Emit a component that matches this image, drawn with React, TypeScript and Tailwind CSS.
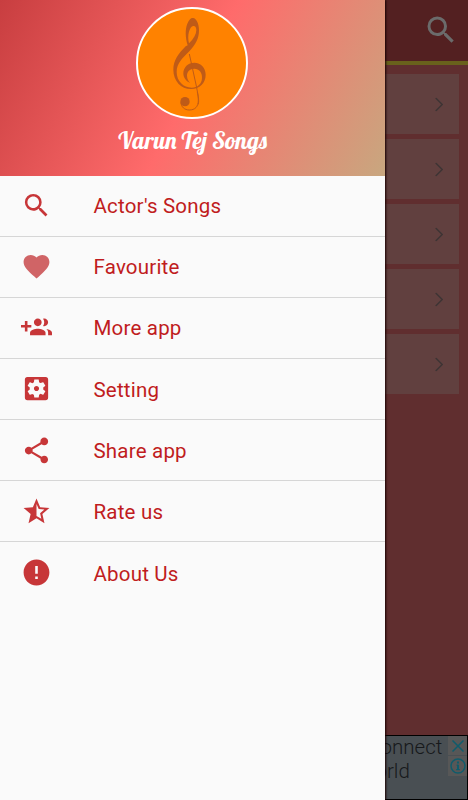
import type { IconType } from "react-icons";
import { MdError, MdFavorite, MdSearch, MdSettingsApplications, MdShare, MdStarHalf } from "react-icons/md";
import clsx from "clsx";

function GroupAdd({ className }: { className?: string }) {
  return (
    <svg viewBox="0 0 24 24" fill="currentColor" className={className}>
      <path d="M8 10H5V7H3v3H0v2h3v3h2v-3h3v-2zm10 1c1.66 0 2.99-1.34 2.99-3S19.66 5 18 5c-.32 0-.63.05-.91.14.57.81.9 1.79.9 2.86s-.34 2.04-.9 2.86c.28.09.59.14.91.14zm-5 0c1.66 0 2.99-1.34 2.99-3S14.66 5 13 5c-1.66 0-3 1.34-3 3s1.34 3 3 3zm6.62 2.16c.83.73 1.38 1.66 1.38 2.84v2h3v-2c0-1.54-2.37-2.49-4.38-2.84zM13 13c-2 0-6 1-6 3v2h12v-2c0-2-4-3-6-3z" />
    </svg>
  );
}

const menu: { label: string; icon: IconType | typeof GroupAdd; faded?: boolean }[] = [
  { label: "Actor's Songs", icon: MdSearch },
  { label: "Favourite", icon: MdFavorite, faded: true },
  { label: "More app", icon: GroupAdd },
  { label: "Setting", icon: MdSettingsApplications },
  { label: "Share app", icon: MdShare },
  { label: "Rate us", icon: MdStarHalf },
  { label: "About Us", icon: MdError },
];

function Clef() {
  return (
    <svg viewBox="55 27 324 324" className="size-full text-[#bf5b17]">
      <path
        fill="currentColor"
        d="M204 136C197 112 196 88 203 71C208 59 214 53 220 54C231 55 238 72 238 91C238 116 228 134 209 154C188 175 171 190 171 216C171 244 192 263 216 263C234 263 246 252 247 234C248 217 238 206 224 206C210 206 202 215 202 227C202 237 207 243 211 249C198 243 191 232 191 220C191 202 205 188 224 188C244 188 258 203 258 224C258 249 240 267 214 267C184 267 161 243 161 209C161 181 177 160 198 139ZM208 130C222 116 230 103 230 90C230 82 226 77 221 78C209 80 202 106 208 130Z"
      />
      <path fill="none" stroke="currentColor" strokeWidth="3" d="M209 162L230 258C233 274 236 287 236 301C236 320 226 330 209 330C195 330 184 321 184 307" />
      <path fill="none" stroke="currentColor" strokeWidth="2.5" d="M233 277C237 291 238 303 236 313" />
      <circle cx="196" cy="305" r="14" fill="currentColor" />
    </svg>
  );
}

function Drawer() {
  return (
    <aside className="absolute inset-y-0 left-0 w-[385px] bg-[#fafafa] shadow-[1px_0_2px_#1a0000]">
      <header className="flex h-[175.5px] flex-col items-center bg-[linear-gradient(118deg,#c83e40_0%,#ff6b6b_50%,#c8a77f_100%)] pt-[7px]">
        <div className="mr-px size-28 overflow-hidden rounded-full border-2 border-white bg-[#ff8200]">
          <Clef />
        </div>
        <h1 className="mt-[5px] font-[Lobster,'Liberation_Serif',serif] text-[23.5px] leading-8 font-normal whitespace-nowrap text-white">
          Varun Tej Songs
        </h1>
      </header>
      <nav>
        {menu.map(({ label, icon: Icon, faded }) => (
          <a key={label} className="flex h-[61.15px] items-center border-b border-[#d6d6d6] pl-[21px] last:border-0">
            <Icon className={clsx("size-[31px]", faded ? "text-[#d06466]" : "text-[#c73638]")} />
            <span className="ml-[41.5px] pt-[2px] font-[Roboto,sans-serif] text-[20.5px] tracking-[0.2px] text-[#c01c20]">{label}</span>
          </a>
        ))}
      </nav>
    </aside>
  );
}

export default function App() {
  return (
    <div className="relative flex h-[800px] w-[468px] flex-col overflow-hidden bg-[#602e2f]">
      <div className="flex h-[65px] justify-end border-b-4 border-[#69611c] bg-[#532021] pt-3 pr-[9px]">
        <MdSearch className="size-9 text-[#6b6b6b]" />
      </div>
      <div className="flex flex-1 flex-col gap-[5px] pt-[9px] pr-[9px]">
        {[0, 1, 2, 3, 4].map((row) => (
          <div key={row} className="flex h-[60px] items-center justify-end bg-[#61403f] pr-4">
            <svg viewBox="0 0 8 14" className="h-[14px] w-2 translate-y-[0.5px] fill-none stroke-[#3e3434] stroke-[1.5]">
              <path d="M.7.5 7.2 7 .7 13.5" />
            </svg>
          </div>
        ))}
      </div>
      <div className="relative flex h-[65px] justify-end border border-black bg-[#494f53]">
        <p className="-mt-px w-[85px] font-[Roboto,sans-serif] text-[20.5px] leading-[24px] font-light whitespace-nowrap text-[#17191b]">
          <span className="-ml-[12px]">connect</span>
          <br />
          <span className="-ml-[22px]">world</span>
        </p>
        <div className="absolute top-0 right-0 flex w-[19px] flex-col gap-px">
          <div className="flex h-[19px] items-center justify-center bg-[#575757]">
            <svg viewBox="0 0 12 12" className="size-3 stroke-[#0f5c6c] stroke-[1.5]">
              <path d="M.5.5l11 11M11.5.5l-11 11" />
            </svg>
          </div>
          <div className="flex h-5 items-center justify-center bg-[#575757]">
            <svg viewBox="0 0 16 16" className="size-4 fill-none stroke-[#0f5c6c]">
              <circle cx="8" cy="8" r="7" strokeWidth="1.4" />
              <path d="M8 3.5v2M8 6.8V12" strokeWidth="2" />
              <path d="M6.5 7.2H8M6 11.7h4" strokeWidth="1" />
            </svg>
          </div>
        </div>
      </div>
      <Drawer />
    </div>
  );
}
